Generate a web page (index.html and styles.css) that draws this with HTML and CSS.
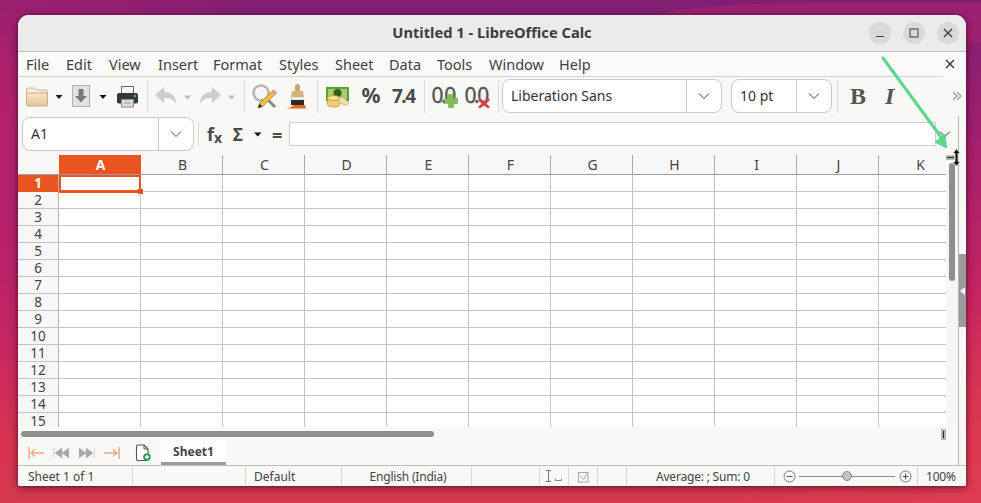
FILE: index.html
```html
<!DOCTYPE html>
<html lang="en">
<head>
<meta charset="utf-8">
<title>Untitled 1 - LibreOffice Calc</title>
<link rel="stylesheet" href="styles.css">
</head>
<body>
<div class="wave"></div>
<div class="window">
  <header class="titlebar">
    <div class="title">Untitled 1 - LibreOffice Calc</div>
    <div class="winbtns">
      <span class="winbtn"><svg width="12" height="12" viewBox="0 0 12 12"><path d="M2 9.500h8" stroke="#3d3d3d" stroke-width="1"/></svg></span>
      <span class="winbtn"><svg width="12" height="12" viewBox="0 0 12 12"><rect x="2" y="2" width="8" height="8" fill="none" stroke="#3d3d3d" stroke-width="1"/></svg></span>
      <span class="winbtn"><svg width="12" height="12" viewBox="0 0 12 12"><path d="M2 2l8 8M10 2l-8 8" stroke="#3d3d3d" stroke-width="1.300"/></svg></span>
    </div>
  </header>

  <nav class="menubar">
    <div class="menus">
      <span class="m-file">File</span><span class="m-edit">Edit</span><span class="m-view">View</span><span class="m-insert">Insert</span><span class="m-format">Format</span><span class="m-styles">Styles</span><span class="m-sheet">Sheet</span><span class="m-data">Data</span><span class="m-tools">Tools</span><span class="m-window">Window</span><span>Help</span>
    </div>
    <svg class="menuclose" width="14" height="24" viewBox="0 0 14 24"><path d="M3 8l8 8M11 8l-8 8" stroke="#333" stroke-width="1.400"/></svg>
  </nav>

  <div class="toolbar">
    <svg width="30" height="39" viewBox="0 0 30 39"><path d="M4.500 13a2 2 0 0 1 2-2h6l2 2h9a2 2 0 0 1 2 2v3h-21z" fill="#f3ecdf" stroke="#c9b594"/><path d="M4.500 16h21v11.500a1.500 1.500 0 0 1-1.500 1.500h-18a1.500 1.500 0 0 1-1.500-1.500z" fill="url(#fold)" stroke="#c9ae84"/><defs><linearGradient id="fold" x1="0" y1="0" x2="0" y2="1"><stop offset="0" stop-color="#f7e6c8"/><stop offset="1" stop-color="#e2c69a"/></linearGradient></defs></svg>
    <svg width="16" height="39" viewBox="0 0 16 39"><path d="M3.500 18h7l-3.500 4z" fill="#111"/></svg>
    <svg width="26" height="39" viewBox="0 0 26 39"><rect x="4.500" y="8.500" width="17" height="21" fill="#e2e2e4" stroke="#b0b0b2"/><path d="M10.500 12h5v7h3.500l-6 6.500-6-6.500h3.500z" fill="#77797c"/></svg>
    <svg width="17" height="39" viewBox="0 0 17 39"><path d="M5.500 18h7l-3.500 4z" fill="#111"/></svg>
    <svg width="32" height="39" viewBox="0 0 32 39"><rect x="10.500" y="9.500" width="12" height="9" fill="#f4f4f4" stroke="#6a6a6a"/><rect x="6" y="16" width="21" height="10.500" rx="2" fill="#33373a"/><circle cx="24" cy="19" r="1.300" fill="#2ab0c0"/><rect x="10.500" y="22.500" width="12" height="7.500" fill="#dcdcdc" stroke="#8a8a8a"/><path d="M13 26h7" stroke="#999"/></svg>
    <span class="sep s8"></span>
    <svg width="29" height="39" viewBox="0 0 29 39"><path d="M4 18l9-8v5c7 0 12 3 12 12-2-5-6-6-12-6v5z" fill="#cdcdcd"/></svg>
    <svg width="16" height="39" viewBox="0 0 16 39"><path d="M4 18.500h7l-3.500 4z" fill="#bdbdbd"/></svg>
    <svg width="28" height="39" viewBox="0 0 28 39"><path d="M25 18l-9-8v5c-7 0-12 3-12 12 2-5 6-6 12-6v5z" fill="#cdcdcd"/></svg>
    <svg width="16" height="39" viewBox="0 0 16 39"><path d="M4 18.500h7l-3.500 4z" fill="#bdbdbd"/></svg>
    <span class="sep s7"></span>
    <svg width="35" height="39" viewBox="0 0 35 39"><path d="M19 21l9 9" stroke="#8a8a8a" stroke-width="3"/><circle cx="14" cy="16" r="7.500" fill="#f6f6f6" stroke="#b5b5b5" stroke-width="2.500"/><path d="M26.500 13l3 3-14 13.500-4.500 1.500 1.500-4.500z" fill="#f2c23c" stroke="#a67d20" stroke-width=".8"/><path d="M26.500 13l3 3-2 2-3-3z" fill="#ec8aa0"/><path d="M11 31l1.500-4.500 3 3z" fill="#333"/></svg>
    <svg width="30" height="39" viewBox="0 0 30 39"><rect x="13" y="7" width="5" height="8" rx="2.500" fill="#c9a26b"/><path d="M10 14h11l1 6H9z" fill="#d7b27c"/><rect x="9" y="20" width="13" height="3" fill="#f4f4f4" stroke="#bbb" stroke-width=".5"/><rect x="9" y="23" width="13" height="5" fill="#2b2b2b"/><path d="M4 31.500c4-.5 6-2 8-3.500h11l1 3.500z" fill="#e8661f"/></svg>
    <span class="sep s9"></span>
    <svg width="34" height="39" viewBox="0 0 34 39"><rect x="5" y="10" width="23" height="14" fill="#5f9e35"/><rect x="7" y="12" width="19" height="10" fill="#a4d06a"/><circle cx="16.500" cy="16" r="4" fill="#2f5f1c"/><path d="M6.500 21h12v6.500c0 1.500-2.700 2.500-6 2.500s-6-1-6-2.500z" fill="#f0d070" stroke="#b79438" stroke-width=".8"/><ellipse cx="12.500" cy="21" rx="6" ry="2.500" fill="#f7e08a" stroke="#b79438" stroke-width=".8"/><path d="M18 20l5 1 5 5-2 2.500-8-2.500z" fill="#f0dca8" stroke="#b89f66" stroke-width=".6"/></svg>
    <svg class="glyph" width="30" height="39" viewBox="0 0 30 39"><text x="6.500" y="26" class="g-pct">%</text></svg>
    <svg class="glyph" width="35" height="39" viewBox="0 0 35 39"><text x="7" y="26" class="g-num">7.4</text></svg>
    <span class="sep s8"></span>
    <svg class="glyph" width="33" height="39" viewBox="0 0 33 39"><text x="3.500" y="26" class="g-dec">0.0</text><path d="M20.500 17.500h5v4h4v5h-4v4h-5v-4h-4v-5h4z" fill="#84bd57" stroke="#6ea344" stroke-width=".6"/></svg>
    <svg class="glyph" width="33" height="39" viewBox="0 0 33 39"><text x="3.500" y="26" class="g-dec">0.0</text><path d="M18.500 21l4.500 3 4.500-3 1.500 2-3.500 3.500 3.500 3.500-2 1.500-4-3-4 3-2-1.500 3.500-3.500-3.500-3.500z" fill="#c74a55"/></svg>
    <span class="sep s6"></span>
    <div class="select fontbox">
      <span class="select-text">Liberation Sans</span>
      <span class="select-arrow"><svg width="12" height="8" viewBox="0 0 12 8"><path d="M1 1.500l5 5 5-5" fill="none" stroke="#444" stroke-width="1"/></svg></span>
    </div>
    <div class="select sizebox">
      <span class="select-text">10 pt</span>
      <span class="select-arrow"><svg width="12" height="8" viewBox="0 0 12 8"><path d="M1 1.500l5 5 5-5" fill="none" stroke="#444" stroke-width="1"/></svg></span>
    </div>
    <span class="sep s-last"></span>
    <span class="fmt fmt-b">B</span>
    <span class="fmt fmt-i">I</span>
    <svg class="more" width="10" height="10" viewBox="0 0 10 10"><path d="M1 1l4 4-4 4M5 1l4 4-4 4" fill="none" stroke="#9a9a9a" stroke-width="1.200"/></svg>
  </div>

  <div class="workspace">
    <div class="content">
      <div class="formulabar">
        <div class="namebox">
          <span class="namebox-text">A1</span>
          <span class="namebox-arrow"><svg width="12" height="8" viewBox="0 0 12 8"><path d="M1 1.500l5 5 5-5" fill="none" stroke="#444" stroke-width="1"/></svg></span>
        </div>
        <span class="fsep"></span>
        <span class="fx">f<span class="fx-sub">x</span></span>
        <span class="sigma">Σ</span>
        <svg class="fcaret" width="8" height="5" viewBox="0 0 8 5"><path d="M0 .5h7.500l-3.700 4z" fill="#111"/></svg>
        <span class="equals">=</span>
        <div class="forminput"></div>
        <svg class="fchev" width="12" height="8" viewBox="0 0 12 8"><path d="M1 1.500l5 5 5-5" fill="none" stroke="#444" stroke-width="1"/></svg>
      </div>

      <div class="sheetrow">
        <div class="sheet">
          <div class="colheads">
            <div class="corner"></div>
            <div class="col active">A</div><div class="col">B</div><div class="col">C</div><div class="col">D</div><div class="col">E</div><div class="col">F</div><div class="col">G</div><div class="col">H</div><div class="col">I</div><div class="col">J</div><div class="col">K</div>
          </div>
          <div class="body">
            <div class="rowheads">
              <div class="row active">1</div><div class="row">2</div><div class="row">3</div><div class="row">4</div><div class="row">5</div><div class="row">6</div><div class="row">7</div><div class="row">8</div><div class="row">9</div><div class="row">10</div><div class="row">11</div><div class="row">12</div><div class="row">13</div><div class="row">14</div><div class="row">15</div>
            </div>
            <div class="cells">
              <div class="cursorcell"><span class="fillhandle"></span></div>
            </div>
          </div>
        </div>
        <div class="vscroll">
          <div class="splitv"><span></span></div>
          <div class="vthumb"></div>
        </div>
      </div>

      <div class="tabarea">
        <div class="hscroll"><div class="hthumb"></div><div class="splith"><span></span></div></div>
        <div class="tabs">
          <svg width="17" height="12" viewBox="0 0 17 12"><path d="M1 0v12M16 6H3M7 2.500L3 6l4 3.500" fill="none" stroke="#eaa88a" stroke-width="1.500"/></svg>
          <svg class="nav-prev" width="16" height="10" viewBox="0 0 16 10"><path d="M.7 0v10M16 0v10L9 5zM9 0v10L2 5z" fill="#a8a8a8" stroke="#a8a8a8" stroke-width=".5"/></svg>
          <svg class="nav-next" width="16" height="10" viewBox="0 0 16 10"><path d="M15.300 0v10M0 0v10l7-5zM7 0v10l7-5z" fill="#a8a8a8" stroke="#a8a8a8" stroke-width=".5"/></svg>
          <svg class="nav-last" width="17" height="12" viewBox="0 0 17 12"><path d="M16 0v12M1 6h13M10 2.500L14 6l-4 3.500" fill="none" stroke="#eaa88a" stroke-width="1.500"/></svg>
          <svg class="newsheet" width="16" height="17" viewBox="0 0 16 17"><path d="M1.500 2.500a1.500 1.500 0 0 1 1.500-1.500h6l4 4v10a1.500 1.500 0 0 1-1.500 1.500h-8.500a1.500 1.500 0 0 1-1.500-1.500z" fill="#fff" stroke="#555" stroke-width="1.100"/><path d="M9 1v4h4" fill="none" stroke="#555"/><circle cx="12" cy="13" r="3.800" fill="#2f9e55"/><path d="M12 11v4M10 13h4" stroke="#fff" stroke-width="1.300"/></svg>
          <div class="tab">Sheet1</div>
        </div>
      </div>
    </div>
    <aside class="sidestrip"><div class="sidehandle"><span class="sidetri"></span></div></aside>
  </div>

  <footer class="statusbar">
    <span class="st st-sheet">Sheet 1 of 1</span>
    <span class="st st-blank"></span>
    <span class="st st-style">Default</span>
    <span class="st st-lang">English (India)</span>
    <span class="st st-blank2"></span>
    <span class="st st-ins"><svg width="22" height="14" viewBox="0 0 22 14"><path d="M3 1.500h5M3 12.500h5M5.500 1.500v11" stroke="#777" fill="none"/><path d="M12.500 9.500v2h6v-2" stroke="#888" fill="none"/></svg></span>
    <span class="st st-sel"><svg width="13" height="13" viewBox="0 0 13 13"><rect x="1.500" y="2.500" width="9.500" height="9.500" fill="none" stroke="#aaa"/><path d="M3.500 6l3 3.500 5-8" fill="none" stroke="#aaa"/></svg></span>
    <span class="st st-blank3"></span>
    <span class="st st-sum">Average: ; Sum: 0</span>
    <span class="st st-zoom">
      <svg width="13" height="13" viewBox="0 0 13 13"><circle cx="6.500" cy="6.500" r="5.500" fill="none" stroke="#777"/><path d="M3.500 6.500h6" stroke="#555"/></svg>
      <span class="track"><span class="knob"></span></span>
      <svg width="13" height="13" viewBox="0 0 13 13"><circle cx="6.500" cy="6.500" r="5.500" fill="none" stroke="#777"/><path d="M3.500 6.500h6M6.500 3.500v6" stroke="#555"/></svg>
    </span>
    <span class="st st-pct">100%</span>
  </footer>
</div>

<svg class="arrow" width="80" height="100" viewBox="0 0 80 100"><path d="M2 2l58 79" stroke="#5ed68e" stroke-width="3" stroke-linecap="round"/><path d="M65.500 92L54 86l10-8z" fill="#5ed68e" stroke="#5ed68e"/></svg>
<svg class="rescursor" width="11" height="19" viewBox="0 0 11 19"><path d="M5.500 .8l4 4.700H7v8h2.500l-4 4.700-4-4.700H4v-8H1.500z" fill="#111" stroke="#eee" stroke-width=".9"/></svg>
</body>
</html>
```

FILE: styles.css
```css
* { box-sizing: border-box; }
html, body { margin: 0; height: 100%; }
body {
  width: 981px;
  height: 503px;
  overflow: hidden;
  padding: 15px 15px 17px 18px;
  position: relative;
  font-family: "Noto Sans", "Open Sans", sans-serif;
  color: #3d3d3d;
  background:
    radial-gradient(300px 200px at 981px 503px, #e03c50 0%, rgba(224,60,80,0) 100%),
    radial-gradient(320px 280px at -20px 140px, #b5206c 0%, rgba(181,32,108,0) 100%),
    linear-gradient(180deg, #7f1f72 0%, #a61f6c 30%, #c72660 60%, #d8344f 90%, #d33a4c 100%);
}
.wave {
  position: absolute;
  left: 640px;
  top: 3px;
  width: 341px;
  height: 40px;
  border-radius: 50% 0 0 0;
  background: #a32270;
  opacity: .8;
}

.window {
  position: relative;
  width: 948px;
  height: 471px;
  display: flex;
  flex-direction: column;
  background: #f8f8f7;
  border-radius: 11px 11px 2px 2px;
  overflow: hidden;
  box-shadow: 0 2px 8px rgba(40, 0, 30, .55), 0 0 3px rgba(40, 0, 30, .4);
}

/* title bar */
.titlebar {
  flex: none;
  height: 37px;
  display: flex;
  align-items: center;
  justify-content: center;
  position: relative;
  background: #ebebeb;
  border-bottom: 1px solid #bdbdbd;
}
.title { font-size: 14.700px; font-weight: 700; color: #3d3d3d; padding-bottom: 2px; }
.winbtns {
  position: absolute;
  right: 7px;
  top: 7px;
  display: flex;
  gap: 12px;
}
.winbtn {
  width: 22px;
  height: 22px;
  border-radius: 50%;
  background: #d9d9d9;
  display: flex;
  align-items: center;
  justify-content: center;
}

/* menu */
.menubar {
  flex: none;
  height: 25px;
  display: flex;
  background: #fafafa;
}
.menus {
  flex: none;
  width: 925px;
  display: flex;
  align-items: center;
  padding-left: 8px;
  font-size: 14.500px;
  color: #3f3f3f;
  border-bottom: 1px solid #d4d4d4;
}
.menus span { flex: none; }
.m-file { width: 40px; }
.m-edit { width: 43px; }
.m-view { width: 49px; }
.m-insert { width: 55px; }
.m-format { width: 66px; }
.m-styles { width: 56px; }
.m-sheet { width: 54px; }
.m-data { width: 48px; }
.m-tools { width: 52px; }
.m-window { width: 70px; }

/* toolbar */
.toolbar {
  flex: none;
  height: 39px;
  display: flex;
  align-items: flex-start;
  padding-left: 4px;
  background: #f8f8f7;
  position: relative;
}
.toolbar > svg { flex: none; display: block; }
.sep { flex: none; height: 33px; margin-top: 3px; position: relative; }
.sep::after {
  content: "";
  position: absolute;
  left: 50%;
  top: 0;
  width: 1px;
  height: 100%;
  background: #dadada;
}
.s6 { width: 8px; }
.s7 { width: 7px; }
.s8 { width: 8px; }
.s9 { width: 9px; }
.s-last { width: 9px; }
.g-pct { font: 700 21px "Noto Sans", sans-serif; fill: #4a4a4a; }
.g-num { font: 700 19px "Noto Sans", sans-serif; fill: #4a4a4a; letter-spacing: -1.500px; }
.g-dec { font: 400 21px "Noto Sans", sans-serif; fill: #555; stroke: #555; stroke-width: .4px; letter-spacing: -2.500px; }

.select {
  flex: none;
  height: 34px;
  margin-top: 2px;
  display: flex;
  background: #fff;
  border: 1px solid #c9c9c9;
  border-radius: 8px;
  font-size: 14px;
  color: #333;
}
.fontbox { width: 220px; }
.sizebox { width: 101px; margin-left: 9px; }
.select-text { flex: 1; display: flex; align-items: center; padding: 0 0 2px 8px; }
.select-arrow {
  flex: none;
  width: 35px;
  display: flex;
  align-items: center;
  justify-content: center;
  border-left: 1px solid #c9c9c9;
}
.fmt {
  flex: none;
  font-family: "Liberation Serif", serif;
  color: #555;
  font-size: 24px;
  line-height: 38px;
}
.fmt-b { font-weight: 700; margin-left: 9px; width: 35px; }
.fmt-i { font-style: italic; font-weight: 700; width: 16px; }
.more { position: absolute; right: 4px; top: 14px; }

/* workspace */
.workspace { flex: 1; display: flex; min-height: 0; }
.content { flex: none; width: 940px; display: flex; flex-direction: column; min-height: 0; }
.formulabar {
  flex: none;
  height: 39px;
  display: flex;
  align-items: center;
  padding-left: 4px;
  background: #f8f8f7;
}
.namebox {
  flex: none;
  width: 172px;
  height: 34px;
  margin-bottom: 4px;
  display: flex;
  background: #fff;
  border: 1px solid #c9c9c9;
  border-radius: 8px;
  font-size: 14px;
  color: #333;
}
.namebox-text { flex: 1; display: flex; align-items: center; padding-left: 8px; }
.namebox-arrow {
  flex: none;
  width: 35px;
  display: flex;
  align-items: center;
  justify-content: center;
  border-left: 1px solid #c9c9c9;
}
.fsep { flex: none; width: 1px; height: 24px; margin: 0 8px 4px 4px; background: #dadada; }
.fx {
  flex: none;
  width: 26px;
  margin-bottom: 2px;
  font-family: "Noto Sans", sans-serif;
  font-weight: 700;
  font-size: 18px;
  color: #4a4a4a;
  line-height: 20px;
}
.fx-sub { font-size: 14px; position: relative; top: 2px; }
.sigma { flex: none; width: 18px; margin-bottom: 2px; font-weight: 700; font-size: 17px; color: #4a4a4a; }
.fcaret { flex: none; margin: 0 10px 2px 3px; }
.equals { flex: none; width: 17px; margin-bottom: 2px; font-weight: 700; font-size: 18px; color: #4a4a4a; }
.forminput {
  flex: none;
  width: 647px;
  height: 24px;
  margin-bottom: 4px;
  background: #fff;
  border: 1px solid #cfcfcf;
}
.fchev { flex: none; margin: 0 0 4px 3px; }

/* sheet */
.sheetrow { flex: none; height: 272px; display: flex; }
.sheet { flex: none; width: 928px; height: 272px; overflow: hidden; background: #fff; }
.colheads { display: flex; height: 20px; background: #f7f7f7; border-bottom: 1px solid #9e9e9e; }
.corner { flex: none; width: 41px; }
.col {
  flex: none;
  width: 82px;
  padding-left: 2px;
  border-right: 1px solid #a9a9a9;
  text-align: center;
  font-size: 14px;
  line-height: 19px;
  color: #444;
}
.col.active { background: #e95420; color: #fff; font-weight: 700; border-right-color: #e95420; }
.body { display: flex; }
.rowheads { flex: none; width: 41px; background: #f7f7f7; border-right: 1px solid #b5b5b5; }
.row {
  height: 17px;
  border-bottom: 1px solid #c4c4c4;
  text-align: center;
  font-size: 13.500px;
  line-height: 17px;
  color: #444;
}
.row.active { background: #e95420; color: #fff; font-weight: 700; border-bottom-color: #e95420; }
.cells {
  flex: 1;
  position: relative;
  height: 255px;
  background-color: #fff;
  background-image:
    linear-gradient(to right, transparent 81px, #c4c4c4 81px),
    linear-gradient(to bottom, transparent 16px, #c4c4c4 16px);
  background-size: 82px 17px;
}
.cursorcell {
  position: absolute;
  left: 0;
  top: 0;
  width: 82px;
  height: 18px;
  background: #fff;
  border: 2px solid #e95420;
  border-bottom-width: 3px;
}
.fillhandle {
  position: absolute;
  right: -4px;
  bottom: -4px;
  width: 5px;
  height: 5px;
  background: #e95420;
}

.vscroll { flex: none; width: 12px; background: #f6f6f5; position: relative; }
.splitv {
  height: 5px;
  margin: 0 3px 3px 0;
  background: #b5b5b5;
  display: flex;
  align-items: center;
  justify-content: center;
}
.splitv span { width: 7px; height: 1px; background: #222; }
.vthumb { width: 6px; height: 118px; margin: 0 0 0 3px; border-radius: 3px; background: #8f8f8f; }

/* tabs */
.tabarea { flex: none; height: 38px; background: #f8f8f7; }
.hscroll { height: 13px; position: relative; padding: 4px 0 0 3px; }
.hthumb { width: 413px; height: 6px; border-radius: 3px; background: #8f8f8f; }
.splith {
  position: absolute;
  right: 12px;
  top: 2px;
  width: 5px;
  height: 11px;
  background: #b5b5b5;
  display: flex;
  justify-content: center;
  align-items: center;
}
.splith span { width: 1px; height: 7px; background: #222; }
.tabs { height: 25px; display: flex; align-items: center; padding-left: 10px; }
.tabs svg { flex: none; }
.nav-prev { margin-left: 8px; }
.nav-next { margin-left: 10px; }
.nav-last { margin-left: 8px; }
.newsheet { margin-left: 15px; }
.tab {
  flex: none;
  width: 65px;
  height: 25px;
  margin-left: 10px;
  background: #fff;
  border-bottom: 3px solid #9a9a9a;
  text-align: center;
  font-size: 12px;
  font-weight: 700;
  line-height: 24px;
  color: #444;
}

.sidestrip { flex: none; width: 8px; border-left: 1px solid #b5b5b5; position: relative; background: #f8f8f7; }
.sidehandle {
  position: absolute;
  left: 0;
  top: 138px;
  width: 7px;
  height: 73px;
  background: #9b9b9b;
}
.sidetri {
  position: absolute;
  left: 1px;
  top: 33px;
  width: 0;
  height: 0;
  border: 4px solid transparent;
  border-left-width: 0;
  border-right: 5px solid #f2f2f2;
}

/* status */
.statusbar {
  flex: none;
  height: 21px;
  display: flex;
  align-items: center;
  border-top: 1px solid #bdbdbd;
  background: #f8f8f7;
  font-size: 12px;
  color: #444;
}
.st {
  flex: none;
  height: 100%;
  display: flex;
  align-items: center;
  border-right: 1px solid #d8d8d8;
}
.st-sheet { width: 115px; padding-left: 10px; }
.st-blank { width: 113px; }
.st-style { width: 96px; padding-left: 8px; }
.st-lang { width: 130px; justify-content: center; padding-left: 3px; letter-spacing: -.2px; }
.st-blank2 { width: 68px; }
.st-ins { width: 29px; justify-content: center; }
.st-sel { width: 29px; justify-content: center; }
.st-blank3 { width: 29px; }
.st-sum { width: 148px; padding-left: 29px; letter-spacing: -.2px; }
.st-zoom { width: 143px; padding-left: 8px; gap: 3px; }
.track { flex: none; position: relative; width: 96px; height: 1px; margin-right: 1px; background: #8e8e8e; }
.knob {
  position: absolute;
  left: 43px;
  top: -5px;
  width: 10px;
  height: 10px;
  border-radius: 50%;
  background: #c4c4c4;
  border: 1px solid #888;
}
.st-pct { flex: 1; border: 0; padding-left: 8px; letter-spacing: -.2px; }

/* over the window */
.arrow { position: absolute; left: 881px; top: 56px; }
.rescursor { position: absolute; left: 951px; top: 148px; }
```
